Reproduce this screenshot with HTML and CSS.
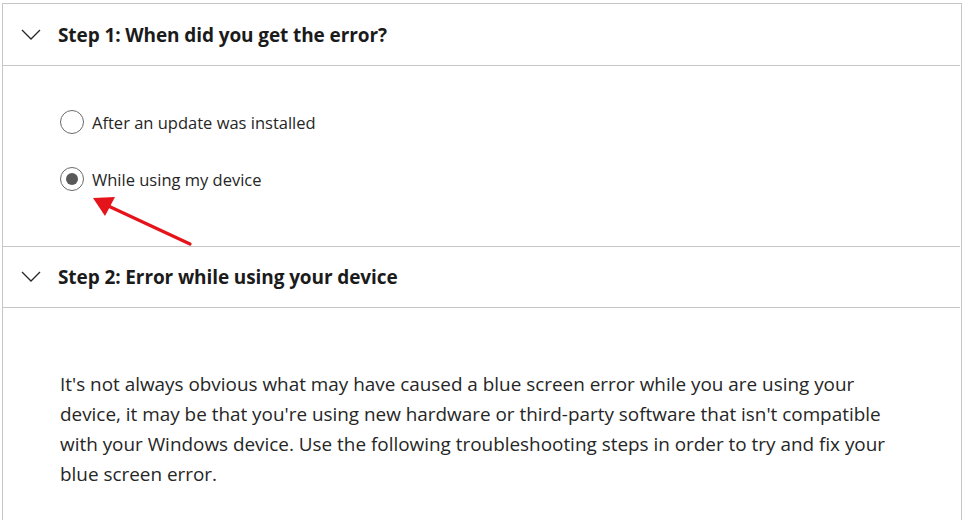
FILE: index.html
```html
<!DOCTYPE html>
<html>
<head>
<meta charset="utf-8">
<link rel="stylesheet" href="styles.css">
</head>
<body>
<div class="panel">
  <div class="header">
    <svg class="chev" width="20" height="11" viewBox="0 0 20 11"><path d="M1 1 L10 10 L19 1" fill="none" stroke="#262626" stroke-width="1.3"/></svg>
    <h2 class="title">Step 1: When did you get the error?</h2>
  </div>
  <div class="body1">
    <label class="opt"><span class="radio"></span><span>After an update was installed</span></label>
    <label class="opt"><span class="radio checked"></span><span>While using my device</span></label>
    <svg class="arrow" width="110" height="60" viewBox="0 0 110 60">
      <line x1="100" y1="52" x2="14" y2="12" stroke="#e5141b" stroke-width="3.2" stroke-linecap="round"/>
      <polygon points="3,6 25,5 15,24" fill="#e5141b"/>
    </svg>
  </div>
  <div class="header h2">
    <svg class="chev" width="20" height="11" viewBox="0 0 20 11"><path d="M1 1 L10 10 L19 1" fill="none" stroke="#262626" stroke-width="1.3"/></svg>
    <h2 class="title">Step 2: Error while using your device</h2>
  </div>
  <div class="body2">
    <p class="text">It's not always obvious what may have caused a blue screen error while you are using your device, it may be that you're using new hardware or third-party software that isn't compatible with your Windows device. Use the following troubleshooting steps in order to try and fix your blue screen error.</p>
  </div>
</div>
</body>
</html>
```
FILE: styles.css
```css
html, body { margin: 0; padding: 0; background: #fff; }
body { font-family: "Open Sans", "Noto Sans", sans-serif; color: #262626; }
.panel {
  margin: 3px 0 0 2px;
  width: 958px;
  height: 517px;
  overflow: hidden;
  border: 1px solid #c6c6c6;
  border-bottom: none;
}
.header {
  height: 61px;
  display: flex;
  align-items: center;
  border-bottom: 1px solid #c6c6c6;
  margin-right: 1px;
}
.header.h2 { height: 60px; border-top: 1px solid #c6c6c6; }
.chev { margin-left: 18px; margin-top: -1px; flex: none; }
.title {
  margin: 0 0 0 17px;
  font-size: 19px;
  font-weight: 700;
  color: #1b1b1b;
  letter-spacing: -0.1px;
}
.body1 {
  position: relative;
  height: 180px;
  padding: 44px 0 0 57px;
  box-sizing: border-box;
  display: flex;
  flex-direction: column;
  gap: 33px;
}
.opt {
  display: flex;
  align-items: center;
  gap: 8px;
  font-size: 16.5px;
  color: #262626;
  height: 24px;
}
.radio {
  width: 22px;
  height: 22px;
  border: 1px solid #6b6b6b;
  border-radius: 50%;
  box-sizing: content-box;
  position: relative;
  flex: none;
}
.radio.checked::after {
  content: "";
  position: absolute;
  left: 5px; top: 5px;
  width: 12px; height: 12px;
  border-radius: 50%;
  background: #595959;
}
.arrow { position: absolute; left: 87px; top: 126px; }
.body2 { padding: 61px 0 0 57px; }
.text {
  margin: 0;
  width: 845px;
  font-size: 18.9px;
  line-height: 30px;
  color: #262626;
}
```
